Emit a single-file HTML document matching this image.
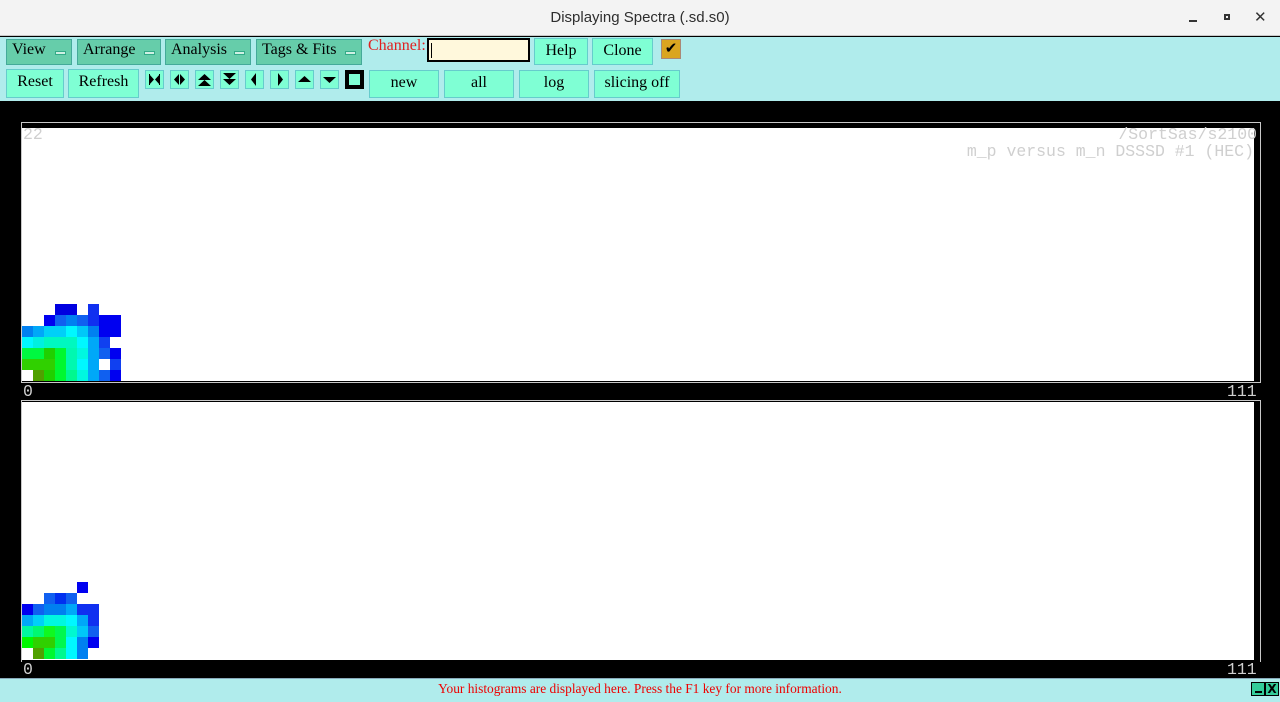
<!DOCTYPE html>
<html><head><style>
*{margin:0;padding:0;box-sizing:border-box}
body{width:1280px;height:702px;position:relative;overflow:hidden;background:#000;font-family:"Liberation Serif",serif;font-size:16px}
.a{position:absolute}
#title{left:0;top:0;width:1280px;height:36px;background:#f3f3f3;border-bottom:1px solid #c8c8c8;text-align:center;line-height:36px;font-family:"Liberation Sans",sans-serif;font-size:15px;color:#2e2e2e}
#tb{left:0;top:37px;width:1280px;height:64px;background:#b0ecec}
.m{background:#66cdaa;border:1px solid #4a9;height:26px;top:39px;line-height:20px;padding-left:5px;color:#000}
.m i{position:absolute;right:5px;top:11px;width:11px;height:4px;background:#d0f0e4;border:1px solid #3a8}
.b{background:#7fffd4;border:1px solid #6cc;text-align:center;color:#000;line-height:24px}
.ib{top:70px;width:19px;height:19px;background:#7fffd4;border:1px solid #6cc}
.ib svg{display:block}
.mono{font-family:"Liberation Mono",monospace;font-size:16.5px;color:#cfcfcf;line-height:16px}
#st{left:0;top:678px;width:1280px;height:24px;background:#b0ecec;border-top:1px solid #8ab;color:#e00;font-size:13.4px;text-align:center;line-height:19px}
</style></head><body>
<div class="a" id="title">Displaying Spectra (.sd.s0)</div>
<div class="a" style="left:1189px;top:20px;width:8px;height:2px;background:#333"></div>
<div class="a" style="left:1224px;top:14px;width:6px;height:6px;border:2px solid #333"></div>
<div class="a" style="left:1254px;top:8px;font-family:'DejaVu Sans',sans-serif;font-size:15px;color:#333">✕</div>
<div class="a" id="tb"></div>
<div class="a m" style="left:6px;width:66px">View<i></i></div>
<div class="a m" style="left:77px;width:84px">Arrange<i></i></div>
<div class="a m" style="left:165px;width:86px">Analysis<i></i></div>
<div class="a m" style="left:256px;width:106px">Tags &amp; Fits<i></i></div>
<div class="a" style="left:368px;top:37px;color:#e02020">Channel:</div>
<div class="a" style="left:427px;top:38px;width:103px;height:24px;background:#fff8dc;border:2px solid #000"><div style="position:absolute;left:2px;top:3px;width:1px;height:15px;background:#000"></div></div>
<div class="a b" style="left:534px;top:38px;width:54px;height:27px">Help</div>
<div class="a b" style="left:592px;top:38px;width:61px;height:27px">Clone</div>
<div class="a" style="left:661px;top:39px;width:20px;height:20px;background:#daa520;border:1px solid #a87;text-align:center;line-height:18px;font-size:15px">✔</div>
<div class="a b" style="left:6px;top:69px;width:58px;height:29px">Reset</div>
<div class="a b" style="left:68px;top:69px;width:71px;height:29px">Refresh</div>
<div class="a ib" style="left:145px"><svg width="17" height="17"><path d="M3 3L8 8.5L3 14ZM14 3L9 8.5L14 14Z"/><rect x="3" y="3" width="1" height="11"/><rect x="13" y="3" width="1" height="11"/></svg></div>
<div class="a ib" style="left:170px"><svg width="17" height="17"><path d="M8 3L3 8.5L8 14ZM9 3L14 8.5L9 14Z"/></svg></div>
<div class="a ib" style="left:195px"><svg width="17" height="17"><path d="M2 9L8.5 3L15 9ZM2 15L8.5 9L15 15Z"/></svg></div>
<div class="a ib" style="left:220px"><svg width="17" height="17"><path d="M2 2L8.5 8L15 2ZM2 8L8.5 14L15 8Z"/></svg></div>
<div class="a ib" style="left:245px"><svg width="17" height="17"><path d="M10 2L5 8.5L10 15Z"/></svg></div>
<div class="a ib" style="left:270px"><svg width="17" height="17"><path d="M7 2L12 8.5L7 15Z"/></svg></div>
<div class="a ib" style="left:295px"><svg width="17" height="17"><path d="M2 11L8.5 5L15 11Z"/></svg></div>
<div class="a ib" style="left:320px"><svg width="17" height="17"><path d="M2 6L8.5 12L15 6Z"/></svg></div>
<div class="a" style="left:345px;top:70px;width:19px;height:19px;background:#000;padding:4px"><div style="width:11px;height:11px;background:#7fffd4"></div></div>
<div class="a b" style="left:369px;top:70px;width:70px;height:28px">new</div>
<div class="a b" style="left:444px;top:70px;width:70px;height:28px">all</div>
<div class="a b" style="left:519px;top:70px;width:70px;height:28px">log</div>
<div class="a b" style="left:594px;top:70px;width:86px;height:28px">slicing off</div>

<div class="a" style="left:21px;top:122px;width:1240px;height:261px;border:1px solid #c8c8c8;background:#000"></div>
<div class="a" style="left:22px;top:128px;width:1232px;height:253px;background:#fff"></div>
<div class="a mono" style="left:23px;top:127px">22</div>
<div class="a mono" style="right:23px;top:127px">/SortSas/s2100</div>
<div class="a mono" style="right:26px;top:144px">m_p versus m_n DSSSD #1 (HEC)</div>
<svg class="a" style="left:22px;top:304px" width="99" height="77" shape-rendering="crispEdges">
<rect x="33" y="0" width="22" height="11" fill="#0000e0"/><rect x="66" y="0" width="11" height="11" fill="#1030f0"/>
<rect x="22" y="11" width="11" height="11" fill="#0000f0"/><rect x="33" y="11" width="11" height="11" fill="#1060f0"/><rect x="44" y="11" width="11" height="11" fill="#0080f0"/><rect x="55" y="11" width="11" height="11" fill="#1060f0"/><rect x="66" y="11" width="11" height="11" fill="#1030f0"/><rect x="77" y="11" width="22" height="11" fill="#0000f0"/>
<rect x="0" y="22" width="11" height="11" fill="#0080f0"/><rect x="11" y="22" width="11" height="11" fill="#00a8f8"/><rect x="22" y="22" width="22" height="11" fill="#00d0f8"/><rect x="44" y="22" width="11" height="11" fill="#00f8ff"/><rect x="55" y="22" width="11" height="11" fill="#00c8f8"/><rect x="66" y="22" width="11" height="11" fill="#0080f0"/><rect x="77" y="22" width="22" height="11" fill="#0000f0"/>
<rect x="0" y="33" width="11" height="11" fill="#00f8ff"/><rect x="11" y="33" width="11" height="11" fill="#00f0e0"/><rect x="22" y="33" width="33" height="11" fill="#00f8c0"/><rect x="55" y="33" width="11" height="11" fill="#00f8ff"/><rect x="66" y="33" width="11" height="11" fill="#00a8f8"/><rect x="77" y="33" width="11" height="11" fill="#1040f0"/>
<rect x="0" y="44" width="22" height="11" fill="#00f840"/><rect x="22" y="44" width="11" height="11" fill="#20d000"/><rect x="33" y="44" width="11" height="11" fill="#00f830"/><rect x="44" y="44" width="11" height="11" fill="#00f8b0"/><rect x="55" y="44" width="11" height="11" fill="#00f8e0"/><rect x="66" y="44" width="11" height="11" fill="#00a8f8"/><rect x="77" y="44" width="11" height="11" fill="#1060f0"/><rect x="88" y="44" width="11" height="11" fill="#0000f0"/>
<rect x="0" y="55" width="33" height="11" fill="#30d000"/><rect x="33" y="55" width="11" height="11" fill="#00f830"/><rect x="44" y="55" width="11" height="11" fill="#00f8b0"/><rect x="55" y="55" width="11" height="11" fill="#00f8ff"/><rect x="66" y="55" width="11" height="11" fill="#00a8f8"/><rect x="88" y="55" width="11" height="11" fill="#1040f0"/>
<rect x="11" y="66" width="11" height="11" fill="#50a000"/><rect x="22" y="66" width="11" height="11" fill="#20d000"/><rect x="33" y="66" width="11" height="11" fill="#00f830"/><rect x="44" y="66" width="11" height="11" fill="#00f890"/><rect x="55" y="66" width="11" height="11" fill="#00f8e0"/><rect x="66" y="66" width="11" height="11" fill="#00a8f8"/><rect x="77" y="66" width="11" height="11" fill="#1060f0"/><rect x="88" y="66" width="11" height="11" fill="#0000f0"/>
</svg>
<div class="a mono" style="left:23px;top:384px">0</div>
<div class="a mono" style="left:1227px;top:384px">111</div>

<div class="a" style="left:21px;top:400px;width:1240px;height:262px;border:1px solid #c8c8c8;border-bottom:none;background:#000"></div>
<div class="a" style="left:22px;top:402px;width:1232px;height:258px;background:#fff"></div>
<svg class="a" style="left:22px;top:582px" width="99" height="77" shape-rendering="crispEdges">
<rect x="55" y="0" width="11" height="11" fill="#0000f0"/>
<rect x="22" y="11" width="11" height="11" fill="#1060f0"/><rect x="33" y="11" width="11" height="11" fill="#0030f0"/><rect x="44" y="11" width="11" height="11" fill="#1060f0"/>
<rect x="0" y="22" width="11" height="11" fill="#0000f0"/><rect x="11" y="22" width="11" height="11" fill="#1060f0"/><rect x="22" y="22" width="22" height="11" fill="#0080f0"/><rect x="44" y="22" width="11" height="11" fill="#00a8f8"/><rect x="55" y="22" width="22" height="11" fill="#1030f0"/>
<rect x="0" y="33" width="11" height="11" fill="#00a8f8"/><rect x="11" y="33" width="11" height="11" fill="#00d0f8"/><rect x="22" y="33" width="22" height="11" fill="#00f8e0"/><rect x="44" y="33" width="11" height="11" fill="#00f8ff"/><rect x="55" y="33" width="11" height="11" fill="#00a8f8"/><rect x="66" y="33" width="11" height="11" fill="#1030f0"/>
<rect x="0" y="44" width="11" height="11" fill="#00f8a0"/><rect x="11" y="44" width="11" height="11" fill="#00f870"/><rect x="22" y="44" width="11" height="11" fill="#10f820"/><rect x="33" y="44" width="11" height="11" fill="#00f850"/><rect x="44" y="44" width="11" height="11" fill="#00f8d0"/><rect x="55" y="44" width="11" height="11" fill="#00c8f8"/><rect x="66" y="44" width="11" height="11" fill="#1060f0"/>
<rect x="0" y="55" width="11" height="11" fill="#00f800"/><rect x="11" y="55" width="22" height="11" fill="#30d000"/><rect x="33" y="55" width="11" height="11" fill="#00f850"/><rect x="44" y="55" width="11" height="11" fill="#00f8ff"/><rect x="55" y="55" width="11" height="11" fill="#0080f0"/><rect x="66" y="55" width="11" height="11" fill="#0000f0"/>
<rect x="11" y="66" width="11" height="11" fill="#50a000"/><rect x="22" y="66" width="11" height="11" fill="#00f830"/><rect x="33" y="66" width="11" height="11" fill="#00f890"/><rect x="44" y="66" width="11" height="11" fill="#00f8ff"/><rect x="55" y="66" width="11" height="11" fill="#0080f0"/>
</svg>
<div class="a mono" style="left:23px;top:662px">0</div>
<div class="a mono" style="left:1227px;top:662px">111</div>

<div class="a" id="st">Your histograms are displayed here. Press the F1 key for more information.</div>
<div class="a" style="left:1251px;top:682px;width:14px;height:14px;background:#3c9;border:1px solid #000"><div style="position:absolute;left:3px;top:8px;width:7px;height:2px;background:#000"></div></div>
<div class="a" style="left:1265px;top:682px;width:14px;height:14px;background:#3c9;border:1px solid #000;font-family:'DejaVu Sans',sans-serif;font-size:12px;line-height:12px;text-align:center;font-weight:bold">X</div>
</body></html>
